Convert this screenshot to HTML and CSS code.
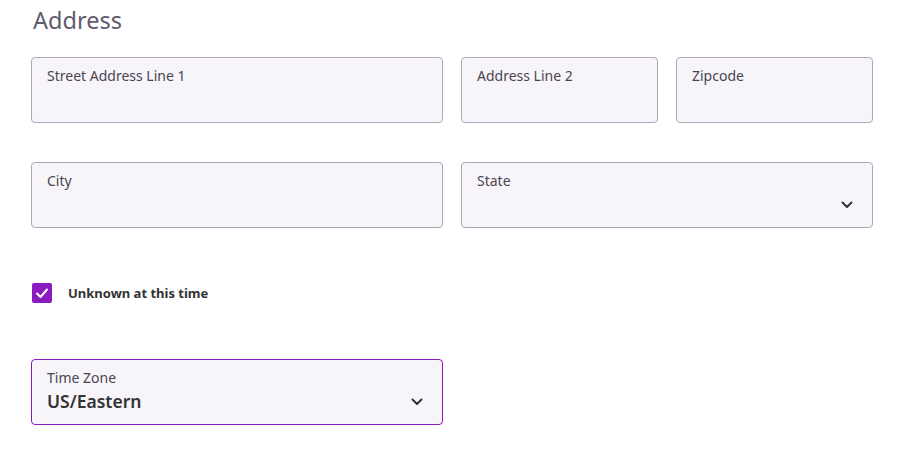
FILE: index.html
```html
<!DOCTYPE html>
<html>
<head>
<meta charset="utf-8">
<link rel="stylesheet" href="styles.css">
</head>
<body>
<div class="page">
  <h2 class="title">Address</h2>
  <div class="row row-1">
    <div class="field"><span class="label">Street Address Line 1</span></div>
    <div class="field"><span class="label">Address Line 2</span></div>
    <div class="field"><span class="label">Zipcode</span></div>
  </div>
  <div class="row row-2">
    <div class="field"><span class="label">City</span></div>
    <div class="field select"><span class="label">State</span>
      <svg class="chev" width="12" height="8" viewBox="0 0 12 8"><path d="M1.5 1.5 L6 6 L10.5 1.5" fill="none" stroke="#333" stroke-width="2" stroke-linecap="round" stroke-linejoin="round"/></svg>
    </div>
  </div>
  <label class="check">
    <span class="box"><svg width="14" height="12" viewBox="0 0 14 12"><path d="M2 6.5 L5.5 10 L12 2.5" fill="none" stroke="#fff" stroke-width="2" stroke-linecap="round" stroke-linejoin="round"/></svg></span>
    <span class="check-text">Unknown at this time</span>
  </label>
  <div class="row row-3">
    <div class="field select focus"><span class="label">Time Zone</span><span class="value">US/Eastern</span>
      <svg class="chev" width="12" height="8" viewBox="0 0 12 8"><path d="M1.5 1.5 L6 6 L10.5 1.5" fill="none" stroke="#333" stroke-width="2" stroke-linecap="round" stroke-linejoin="round"/></svg>
    </div>
  </div>
</div>
</body>
</html>
```
FILE: styles.css
```css
* { box-sizing: border-box; }
html, body { margin: 0; padding: 0; background: #fff; }
body { font-family: "Noto Sans", "Open Sans", sans-serif; color: #333; }
.page { padding: 4px 30px 0 31px; width: 903px; }
.title { margin: 0 0 0 2px; font-weight: 400; font-size: 23.5px; line-height: 32px; color: #615a6e; }
.row { display: grid; gap: 18px; }
.row-1 { grid-template-columns: 412px 197px 197px; margin-top: 21px; }
.row-2 { grid-template-columns: 412px 412px; margin-top: 39px; }
.row-3 { grid-template-columns: 412px; margin-top: 56px; }
.field { position: relative; height: 66px; background: #f7f5f9; border: 1px solid #aea6b6; border-radius: 4px; padding: 9px 15px 8px; display: flex; flex-direction: column; }
.label { font-size: 14px; line-height: 18px; color: #4a4550; }
.value { font-size: 17.5px; line-height: 24px; font-weight: 600; color: #333; margin-top: 2px; }
.focus { border-color: #8a1bc0; }
.chev { position: absolute; right: 19px; top: 38px; }
.check { display: flex; align-items: center; gap: 16px; margin-top: 55px; margin-left: 1px; }
.box { width: 20px; height: 20px; border-radius: 2px; background: #8a1bc0; display: flex; align-items: center; justify-content: center; }
.check-text { font-size: 13px; font-weight: 700; color: #333; }
```
